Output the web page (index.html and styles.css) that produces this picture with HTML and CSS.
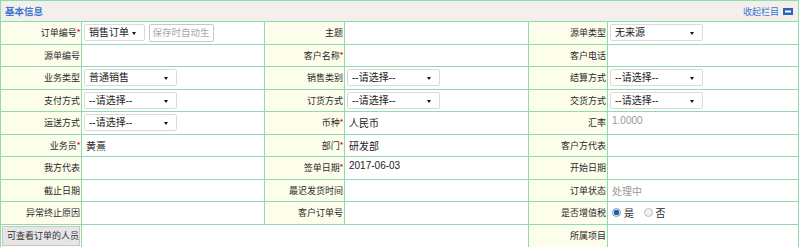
FILE: index.html
```html
<!DOCTYPE html>
<html>
  <head>
    <meta charset="utf-8" />
    <link rel="stylesheet" href="styles.css">
    <title>基本信息</title>
  </head>
  <body>
    <div class="panel">
      <div class="panel-head">
        <span class="panel-title">基本信息</span>
        <a class="fold">收起栏目
          <svg width="10" height="7" viewBox="0 0 10 7"><rect x="0" y="0" width="10" height="7" fill="#2b63b8"/><rect x="2" y="2.5" width="6" height="2" fill="#fff"/></svg>
        </a>
      </div>
      <table class="form">
        <colgroup>
          <col class="c-label1"><col class="c-val1"><col class="c-label2"><col class="c-val2"><col class="c-label3"><col class="c-val3">
        </colgroup>
        <tr>
          <td class="label">订单编号<i>*</i></td>
          <td><span class="sel w60"><select><option>销售订单</option></select></span> <input class="auto" placeholder="保存时自动生成"></td>
          <td class="label">主题</td>
          <td></td>
          <td class="label">源单类型</td>
          <td><span class="sel w92"><select><option>无来源</option></select></span></td>
        </tr>
        <tr>
          <td class="label">源单编号</td>
          <td></td>
          <td class="label">客户名称<i>*</i></td>
          <td></td>
          <td class="label">客户电话</td>
          <td></td>
        </tr>
        <tr>
          <td class="label">业务类型</td>
          <td><span class="sel w92"><select><option>普通销售</option></select></span></td>
          <td class="label">销售类别</td>
          <td><span class="sel w92"><select><option>--请选择--</option></select></span></td>
          <td class="label">结算方式</td>
          <td><span class="sel w92"><select><option>--请选择--</option></select></span></td>
        </tr>
        <tr>
          <td class="label">支付方式</td>
          <td><span class="sel w92"><select><option>--请选择--</option></select></span></td>
          <td class="label">订货方式</td>
          <td><span class="sel w92"><select><option>--请选择--</option></select></span></td>
          <td class="label">交货方式</td>
          <td><span class="sel w92"><select><option>--请选择--</option></select></span></td>
        </tr>
        <tr>
          <td class="label">运送方式</td>
          <td><span class="sel w92"><select><option>--请选择--</option></select></span></td>
          <td class="label">币种<i>*</i></td>
          <td class="text">人民币</td>
          <td class="label">汇率</td>
          <td class="text muted">1.0000</td>
        </tr>
        <tr>
          <td class="label">业务员<i>*</i></td>
          <td class="text">黄熹</td>
          <td class="label">部门<i>*</i></td>
          <td class="text">研发部</td>
          <td class="label">客户方代表</td>
          <td></td>
        </tr>
        <tr>
          <td class="label">我方代表</td>
          <td></td>
          <td class="label">签单日期<i>*</i></td>
          <td class="text">2017-06-03</td>
          <td class="label">开始日期</td>
          <td></td>
        </tr>
        <tr>
          <td class="label">截止日期</td>
          <td></td>
          <td class="label">最迟发货时间</td>
          <td></td>
          <td class="label">订单状态</td>
          <td class="text muted">处理中</td>
        </tr>
        <tr>
          <td class="label">异常终止原因</td>
          <td></td>
          <td class="label">客户订单号</td>
          <td></td>
          <td class="label">是否增值税</td>
          <td>
            <label class="radio"><input type="radio" name="vat" checked> 是</label>
            <label class="radio"><input type="radio" name="vat"> 否</label>
          </td>
        </tr>
        <tr>
          <td class="label btn-cell"><button type="button" class="viewers">可查看订单的人员</button></td>
          <td colspan="3"></td>
          <td class="label">所属项目</td>
          <td></td>
        </tr>
      </table>
    </div>
  </body>
</html>
```

FILE: styles.css
```css
body {
  margin: 0;
  font-family: "Liberation Sans", "Noto Sans CJK SC", sans-serif;
  font-size: 9px;
  color: #2a2a2a;
  background: #fff;
}

.panel {
  width: 797px;
  border: 1px solid #8edcad;
  border-bottom: none;
}

.panel-head {
  height: 20px;
  background-color: #f2efed;
  display: flex;
  align-items: center;
  justify-content: space-between;
  padding: 0 5px 0 4px;
}

.panel-title {
  color: #3a76d0;
  font-weight: bold;
  font-size: 9.5px;
}

.fold {
  color: #3a76d0;
  display: flex;
  align-items: center;
  gap: 4px;
}

.form {
  width: 798px;
  margin-left: -1px;
  border-collapse: collapse;
  table-layout: fixed;
}

.c-label1 { width: 81px; }
.c-val1 { width: 183px; }
.c-label2 { width: 80px; }
.c-val2 { width: 184px; }
.c-label3 { width: 79px; }
.c-val3 { width: 191px; }

.form tr {
  height: 22.5px;
}

.form td {
  border: 1px solid #8edcad;
  padding: 0 2px;
  white-space: nowrap;
  overflow: hidden;
}

.form td.label {
  background-color: #fdfdeb;
  text-align: right;
  padding-right: 1px;
}

.label i {
  color: #e00;
  font-style: normal;
  font-size: 8px;
  font-weight: bold;
  vertical-align: 2px;
}

.form td.text {
  vertical-align: top;
  padding: 3px 4px 0;
  font-size: 10px;
  color: #222;
}

.form td.muted {
  color: #999;
}

.sel {
  position: relative;
  display: inline-block;
  vertical-align: middle;
}

.sel select {
  appearance: none;
  -webkit-appearance: none;
  height: 17px;
  border: 1px solid #dadada;
  border-radius: 2px;
  background: #fff;
  font-family: "Liberation Sans", "Noto Sans CJK SC", sans-serif;
  font-size: 10px;
  color: #222;
  padding: 0 0 0 4px;
  margin: 0;
  width: 100%;
}

.sel::after {
  content: "";
  position: absolute;
  right: 9px;
  top: 8px;
  border-left: 2.5px solid transparent;
  border-right: 2.5px solid transparent;
  border-top: 3px solid #111;
}

.w60 { width: 61px; }
.w92 { width: 93px; }

.auto {
  width: 57px;
  height: 16px;
  vertical-align: middle;
  border: 1px solid #c6c6c6;
  border-radius: 2px;
  padding: 0 3px;
  margin: 0 0 0 1px;
  font-family: "Liberation Sans", "Noto Sans CJK SC", sans-serif;
  font-size: 9.5px;
}

.auto::placeholder {
  color: #aaa;
}

.radio {
  display: inline-flex;
  align-items: center;
  margin-left: 2px;
  margin-right: 5px;
  font-size: 10px;
}

.radio input {
  appearance: none;
  -webkit-appearance: none;
  width: 9px;
  height: 9px;
  margin: 0 3px 0 0;
  border: 1px solid #bbb;
  border-radius: 50%;
  background: #f2f2f2;
}

.radio input:checked {
  background: radial-gradient(circle, #1f5fa8 0 2.5px, #d9e6f2 3px);
  border-color: #7c9cc0;
}

.form td.btn-cell {
  padding: 1px;
}

.viewers {
  width: 100%;
  height: 20px;
  border: 1px solid #c8c8c8;
  background: #e6e6e6;
  font-family: "Liberation Sans", "Noto Sans CJK SC", sans-serif;
  font-size: 9px;
  color: #333;
  padding: 0 4px;
  text-align: left;
}
```
